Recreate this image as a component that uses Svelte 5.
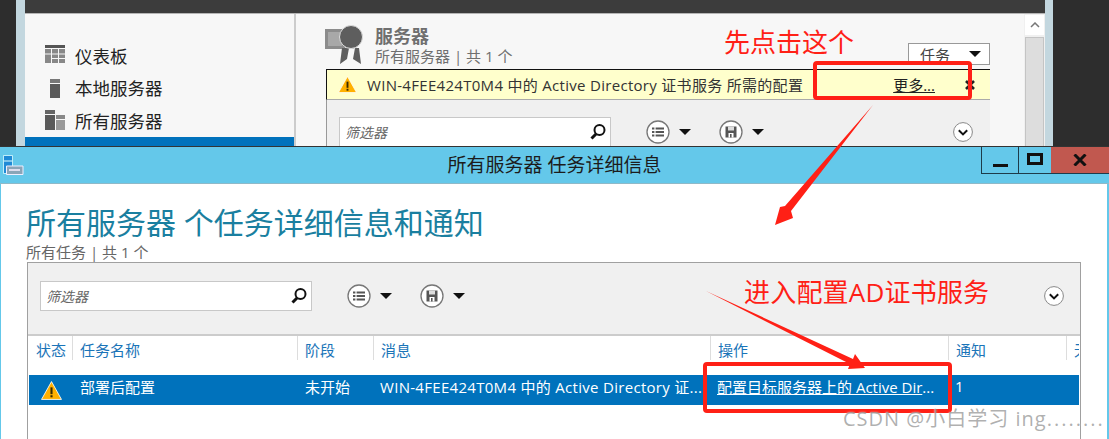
<script>
  const sidebarItems = [
    { label: '仪表板', icon: 'dash' },
    { label: '本地服务器', icon: 'local' },
    { label: '所有服务器', icon: 'all' }
  ];

  const columns = [
    { label: '状态', width: 44 },
    { label: '任务名称', width: 225 },
    { label: '阶段', width: 76 },
    { label: '消息', width: 337 },
    { label: '操作', width: 238 },
    { label: '通知', width: 118 },
    { label: '无', width: 20 }
  ];
</script>

{#snippet warning(size)}
  <svg class="warn" width={size} height={size} viewBox="0 0 20 20">
    <path d="M10 1.5 L19.5 18.5 H0.5 Z" fill="#ffb000" stroke="#fff" stroke-width="0.8" />
    <rect x="9" y="7" width="2" height="6.5" fill="#3a2a00" />
    <rect x="9" y="14.5" width="2" height="2" fill="#3a2a00" />
  </svg>
{/snippet}

{#snippet search()}
  <svg width="18" height="18" viewBox="0 0 18 18">
    <circle cx="10.5" cy="7" r="5" fill="#fff" stroke="#111" stroke-width="2" />
    <path d="M7 11 L2.5 15.5" stroke="#111" stroke-width="3" />
  </svg>
{/snippet}

{#snippet listBtn()}
  <svg width="24" height="24" viewBox="0 0 24 24">
    <circle cx="12" cy="12" r="11" fill="#fff" stroke="#777" stroke-width="1.3" />
    <path d="M6 7.5h2.4v2H6zM9.6 7.5h8.4v2H9.6zM6 11h2.4v2H6zM9.6 11h8.4v2H9.6zM6 14.5h2.4v2H6zM9.6 14.5h8.4v2H9.6z" fill="#555" />
  </svg>
{/snippet}

{#snippet saveBtn()}
  <svg width="24" height="24" viewBox="0 0 24 24">
    <circle cx="12" cy="12" r="11" fill="#fff" stroke="#777" stroke-width="1.3" />
    <path d="M6.5 6.5h11v11h-11z" fill="#555" />
    <path d="M9 6.5h6v4H9z" fill="#ddd" />
    <path d="M9.5 13h5v4.5h-5z" fill="#fff" />
    <path d="M11 14h1.6v3.5H11z" fill="#555" />
  </svg>
{/snippet}

{#snippet chevron()}
  <svg width="20" height="20" viewBox="0 0 20 20">
    <circle cx="10" cy="10" r="9.4" fill="#fff" stroke="#888" stroke-width="1" />
    <path d="M5.8 8.2 L10 12.4 L14.2 8.2" fill="none" stroke="#111" stroke-width="2" />
  </svg>
{/snippet}

{#snippet toolbar()}
  <div class="filter">
    <span class="placeholder">筛选器</span>
    {@render search()}
  </div>
  <div class="tool first">{@render listBtn()}<i class="tri"></i></div>
  <div class="tool">{@render saveBtn()}<i class="tri"></i></div>
  <div class="chev">{@render chevron()}</div>
{/snippet}

<div class="desktop">
  <div class="back-frame">
    <div class="back-window">
      <div class="back-title"></div>
      <div class="back-main">
        <nav class="sidebar">
          {#each sidebarItems as item}
            <div class="nav-item">
              <svg width="20" height="20" viewBox="0 0 20 20">
                {#if item.icon === 'dash'}
                  <path d="M0 0h20v3H0z" fill="#555" />
                  <path d="M0 4h6v4.500H0zM7 4h6v4.500H7zM14 4h6v4.500h-6zM0 9.500h6V18H0zM7 9.500h6V13H7zM14 9.500h6V13h-6zM7 14h6v4H7zM14 14h6v4h-6z" fill="#888" />
                {:else if item.icon === 'local'}
                  <path d="M5 1h10v4H5z" fill="#777" />
                  <path d="M5 6h10v14H5z" fill="#5a5a5a" />
                {:else}
                  <path d="M0 0h10v4H0z" fill="#666" />
                  <path d="M0 5h10v15H0z" fill="#5a5a5a" />
                  <path d="M11 5h9v4h-9z" fill="#888" />
                  <path d="M11 10h9v10h-9z" fill="#999" />
                {/if}
              </svg>
              <span>{item.label}</span>
            </div>
          {/each}
          <div class="nav-selected"></div>
        </nav>
        <section class="content">
          <header class="role-head">
            <svg class="role-icon" width="42" height="42" viewBox="0 0 42 42">
              <path d="M0 5h20v20H0z" fill="#8c8c8c" />
              <path d="M3 8h14v14H3z" fill="#a8a8a8" />
              <path d="M17 24 L15 40 L22 35 L24 24ZM30 24 L28 35 L36 40 L34 24Z" fill="#5e5e5e" />
              <circle cx="26" cy="13" r="11.500" fill="#5e5e5e" stroke="#ddd" stroke-width="1" />
            </svg>
            <div class="role-text">
              <strong>服务器</strong>
              <span>所有服务器 | 共 1 个</span>
            </div>
            <div class="tasks-btn">任务<i class="tri"></i></div>
          </header>
          <div class="notice">
            {@render warning(19)}
            <span class="notice-text">WIN-4FEE424T0M4 中的 Active Directory 证书服务 所需的配置</span>
            <a class="more" href="#more">更多...</a>
            <svg class="notice-close" width="10" height="10" viewBox="0 0 10 10"><path d="M1 1 L9 9 M9 1 L1 9" stroke="#222" stroke-width="2.600" /></svg>
          </div>
          <div class="back-toolbar">{@render toolbar()}</div>
        </section>
        <div class="scrollbar">
          <div class="scroll-up">
            <svg width="10" height="6" viewBox="0 0 10 6"><path d="M1 5 L5 1 L9 5" fill="none" stroke="#777" stroke-width="1.500" /></svg>
          </div>
          <div class="scroll-track"></div>
        </div>
      </div>
    </div>
  </div>

  <div class="front-window">
    <div class="front-title">
      <svg class="app-icon" width="21" height="21" viewBox="0 0 21 21">
        <path d="M0.500 0.500h9v18h-9z" fill="#1f8ad6" stroke="#dff" stroke-width="0.800" />
        <path d="M1 6h8" stroke="#dff" stroke-width="1" />
        <path d="M3.500 11h16.500v8.500H3.500z" fill="#8aa5b8" stroke="#eef" stroke-width="1" />
        <path d="M6 14h11v2H6z" fill="#dde" />
      </svg>
      <span class="front-caption">所有服务器 任务详细信息</span>
      <div class="win-buttons">
        <div class="win-btn min"><i></i></div>
        <div class="win-btn max"><i></i></div>
        <div class="win-btn close">
          <svg width="14" height="12" viewBox="0 0 14 12"><path d="M1.500 0.500 L12.500 11.500 M12.500 0.500 L1.500 11.500" stroke="#111" stroke-width="3" /></svg>
        </div>
      </div>
    </div>
    <div class="front-body">
      <h1>所有服务器 个任务详细信息和通知</h1>
      <p class="count">所有任务 | 共 1 个</p>
      <div class="panel">
        <div class="front-toolbar">{@render toolbar()}</div>
        <div class="table-head">
          {#each columns as col}
            <div class="th" style="width: {col.width}px">{col.label}</div>
          {/each}
        </div>
        <div class="table-row">
          <div class="td status">{@render warning(21)}</div>
          <div class="td name">部署后配置</div>
          <div class="td stage">未开始</div>
          <div class="td msg">WIN-4FEE424T0M4 中的 Active Directory 证...</div>
          <div class="td action"><a href="#cfg">配置目标服务器上的 Active Dir</a>...</div>
          <div class="td notify">1</div>
        </div>
      </div>
    </div>
  </div>

  <svg class="marks" width="1109" height="439" viewBox="0 0 1109 439">
    <rect x="815" y="63" width="155" height="35" rx="2" fill="none" stroke="#ff2016" stroke-width="4" />
    <rect x="705" y="364" width="245" height="47" rx="2" fill="none" stroke="#ff2016" stroke-width="4" />
    <path d="M873 105 L791 211 L793 218 L775 225 L780 207 L785 206 Z" fill="#ff2016" />
    <path d="M706 291 L853 359 L855 354 L865 368 L848 369 L850 364 Z" fill="#ff2016" />
  </svg>
  <span class="note note-a">先点击这个</span>
  <span class="note note-b">进入配置AD证书服务</span>
  <span class="watermark">CSDN @小白学习 ing<span class="dots">........</span></span>
</div>

<style>
  :global(body) {
    margin: 0;
    overflow: hidden;
  }

  .desktop {
    position: relative;
    width: 1109px;
    height: 439px;
    overflow: hidden;
    background: #2d2d2d;
    font-family: "Open Sans", "Noto Sans CJK SC", sans-serif;
    font-size: 15px;
  }

  .tri {
    display: block;
    width: 0;
    height: 0;
    border-left: 6.500px solid transparent;
    border-right: 6.500px solid transparent;
    border-top: 6.500px solid #111;
  }

  /* background server manager window */
  .back-frame {
    position: absolute;
    left: 16px;
    top: 0;
    width: 1037px;
    height: 146px;
    box-sizing: border-box;
    padding: 0 8px 0 9px;
    background: #c3d7df;
  }

  .back-window {
    height: 100%;
    display: flex;
    flex-direction: column;
    overflow: hidden;
    background: #f7f7f7;
  }

  .back-title {
    height: 13px;
    flex: none;
    background: #3c3c3c;
    border-bottom: 1px solid #b5b5b5;
  }

  .back-main {
    flex: 1;
    display: flex;
    min-height: 0;
  }

  .sidebar {
    width: 269px;
    flex: none;
    padding-top: 25px;
    border-right: 2px solid #ccc;
    display: flex;
    flex-direction: column;
  }

  .nav-item {
    height: 32.500px;
    flex: none;
    display: flex;
    align-items: center;
    gap: 10px;
    padding-left: 20px;
    font-size: 17.500px;
    color: #222;
  }

  .nav-selected {
    height: 20px;
    flex: none;
    background: #0072bc;
  }

  .content {
    flex: 1;
    min-width: 0;
    padding: 10px 34px 0 30px;
  }

  .role-head {
    height: 45px;
    display: flex;
    align-items: flex-start;
    gap: 8px;
  }

  .role-icon {
    margin-left: -1px;
  }

  .role-text {
    display: flex;
    flex-direction: column;
    color: #6f6f6f;
    line-height: 19px;
    margin-top: 2px;
  }

  .role-text strong {
    font-size: 18px;
    line-height: 21px;
  }

  .tasks-btn {
    margin: 19px 0 0 auto;
    width: 80px;
    height: 20px;
    border: 1px solid #999;
    background: #fff;
    display: flex;
    align-items: center;
    justify-content: space-between;
    color: #444;
    text-indent: 11px;
  }

  .tasks-btn .tri {
    margin-right: 8px;
  }

  .notice {
    height: 29px;
    display: flex;
    align-items: center;
    background: #ffffcc;
    border-top: 1px solid #111;
    border-left: 1px solid #111;
    border-bottom: 1px solid #aaa;
    color: #333;
    padding-left: 11px;
  }

  .warn {
    flex: none;
  }

  .notice-text {
    margin-left: 10px;
    white-space: nowrap;
    letter-spacing: 0.3px;
  }

  .more {
    margin-left: auto;
    color: #222;
  }

  .notice-close {
    flex: none;
    margin: 0 15px 0 30px;
  }

  .back-toolbar {
    height: 60px;
    display: flex;
    align-items: flex-start;
    padding: 17px 17px 0 12px;
    background: #f0f0f0;
    border-left: 1px solid #999;
  }

  .scrollbar {
    width: 21px;
    flex: none;
    padding: 1px;
    box-sizing: border-box;
    background: #f0f0f0;
  }

  .scroll-up {
    height: 20px;
    display: flex;
    align-items: center;
    justify-content: center;
    background: #fff;
  }

  .scroll-track {
    height: 120px;
    margin-top: 2px;
    background: #ddd;
    border: 1px solid #c4c4c4;
  }

  /* front task details window */
  .front-window {
    position: absolute;
    left: 0;
    top: 146px;
    width: 1109px;
    height: 293px;
    display: flex;
    flex-direction: column;
    box-sizing: border-box;
    border-top: 1px solid #333;
    background: #64c8ea;
  }

  .front-title {
    position: relative;
    height: 36px;
    flex: none;
    display: flex;
    justify-content: center;
    align-items: center;
    font-size: 19px;
    color: #1c1c1c;
    border-bottom: 1px solid #8fb9c8;
  }

  .app-icon {
    position: absolute;
    left: 3px;
    top: 8px;
  }

  .front-caption {
    line-height: 36px;
  }

  .win-buttons {
    position: absolute;
    right: 0;
    top: 0;
    display: flex;
    height: 27px;
    border-left: 1px solid #1d3b4a;
    border-bottom: 1px solid #1d3b4a;
    box-sizing: border-box;
  }

  .win-btn {
    display: flex;
    align-items: center;
    justify-content: center;
  }

  .win-btn.min {
    width: 36px;
    border-right: 1px solid #1d3b4a;
  }

  .win-btn.min i {
    width: 15px;
    height: 3px;
    margin-top: 11px;
    background: #111;
  }

  .win-btn.max {
    width: 32px;
  }

  .win-btn.max i {
    width: 10px;
    height: 6px;
    border: 3px solid #111;
    margin-bottom: 2px;
  }

  .win-btn.close {
    width: 58px;
    background: #c1584f;
  }

  .front-body {
    flex: 1;
    min-height: 0;
    margin: 0 2px 0 1px;
    background: #fff;
    padding: 0 26px 0 25px;
    display: flex;
    flex-direction: column;
  }

  h1 {
    margin: 18px 0 0;
    font-size: 30px;
    line-height: 42px;
    font-weight: 400;
    color: #1a7fa0;
  }

  .count {
    margin: 0;
    height: 18px;
    line-height: 17px;
    color: #666;
  }

  .panel {
    flex: 1;
    margin-left: 1px;
    border: 1px solid #a0a0a0;
    border-bottom: 0;
    padding: 0 1px;
    display: flex;
    flex-direction: column;
  }

  .front-toolbar {
    height: 53px;
    flex: none;
    display: flex;
    align-items: flex-start;
    padding: 18px 16px 0 12px;
    background: #f0f0f0;
    border-bottom: 2px solid #ccc;
    margin: 0 -1px;
  }

  .filter {
    width: 262px;
    height: 28px;
    flex: none;
    display: flex;
    align-items: center;
    justify-content: space-between;
    padding: 0 3px 0 5px;
    background: #fff;
    border: 1px solid #c8c8c8;
  }

  .placeholder {
    font-style: italic;
    color: #666;
    font-size: 14px;
  }

  .tool {
    display: flex;
    align-items: center;
    gap: 9px;
    height: 30px;
    margin-left: 28px;
  }

  .tool.first {
    margin-left: 35px;
  }

  .chev {
    margin-left: auto;
    height: 30px;
    display: flex;
    align-items: center;
  }

  .table-head {
    height: 39px;
    display: flex;
    flex: none;
    color: #1a74b8;
    overflow: hidden;
  }

  .th {
    flex: none;
    box-sizing: border-box;
    padding: 4px 0 0 7px;
    height: 24px;
    line-height: 20px;
    border-right: 1px solid #ddd;
    white-space: nowrap;
  }

  .table-row {
    height: 30px;
    flex: none;
    display: flex;
    align-items: center;
    background: #0072bc;
    color: #fff;
  }

  .td {
    flex: none;
    white-space: nowrap;
    box-sizing: border-box;
    padding-bottom: 8px;
  }

  .td.status {
    width: 51px;
    padding: 0 0 0 12px;
    display: flex;
  }

  .td.name { width: 225px; }
  .td.stage { width: 75px; }
  .td.msg { width: 337px; letter-spacing: 0.3px; }
  .td.action { width: 238px; }
  .td a { color: #fff; }

  /* hand-drawn annotations over the screenshot */
  .marks {
    position: absolute;
    left: 0;
    top: 0;
    pointer-events: none;
  }

  .note {
    position: absolute;
    font-size: 26px;
    line-height: 34px;
    color: #ff2016;
    white-space: nowrap;
  }

  .note-a {
    left: 724px;
    top: 25px;
  }

  .note-b {
    left: 744px;
    top: 275px;
    letter-spacing: 0.2px;
  }

  .watermark {
    position: absolute;
    left: 843px;
    top: 405px;
    font-size: 20px;
    line-height: 28px;
    letter-spacing: 1px;
    color: rgba(150, 150, 150, 0.75);
    text-shadow: 0 0 2px rgba(255, 255, 255, 0.6);
    white-space: nowrap;
  }

  .dots {
    letter-spacing: 2px;
  }
</style>
